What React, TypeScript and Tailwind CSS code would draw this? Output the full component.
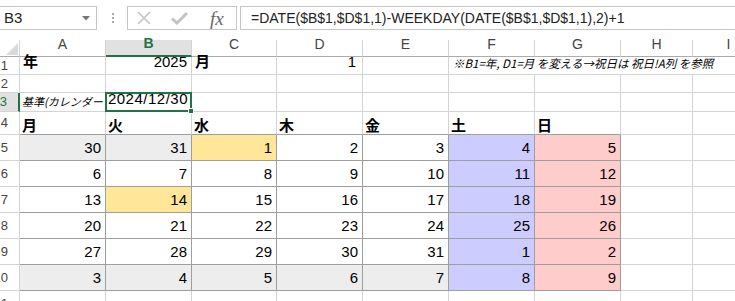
import React from 'react';

const FONT = { fontFamily: '"Liberation Sans", "Noto Sans CJK JP", sans-serif' };

const cols = ['A', 'B', 'C', 'D', 'E', 'F', 'G', 'H', 'I'];
const days = ['月', '火', '水', '木', '金', '土', '日'];

const weeks = [
  [30, 31, 1, 2, 3, 4, 5],
  [6, 7, 8, 9, 10, 11, 12],
  [13, 14, 15, 16, 17, 18, 19],
  [20, 21, 22, 23, 24, 25, 26],
  [27, 28, 29, 30, 31, 1, 2],
  [3, 4, 5, 6, 7, 8, 9],
];

// fill per week row / weekday column
const fillFor = (w: number, d: number) => {
  if (d === 5) return 'bg-[#ccccff]';
  if (d === 6) return 'bg-[#ffcccc]';
  if ((w === 0 && d === 2) || (w === 2 && d === 1)) return 'bg-[#ffe699]';
  if (w === 0 && d < 2) return 'bg-[#ededed]';
  if (w === 5) return 'bg-[#ededed]';
  return 'bg-white';
};

const RowHead: React.FC<{ n: number; selected?: boolean }> = ({ n, selected }) => (
  <div
    className={`flex items-center justify-end pr-[11px] border-b overflow-hidden text-[13px] ${
      selected
        ? 'bg-[#e1e1e1] text-[#217346] border-r-2 border-r-[#217346] border-b-[#d4d4d4]'
        : 'bg-white text-[#444] border-r border-[#d4d4d4]'
    }`}
  >
    <span className="whitespace-nowrap">{n}</span>
  </div>
);

const Empty: React.FC<{ extra?: string }> = ({ extra = '' }) => (
  <div className={`border-r border-b border-[#d4d4d4] ${extra}`} />
);

const App: React.FC = () => {
  return (
    <div className="w-[735px] h-[301px] overflow-hidden bg-white text-black" style={FONT}>
      {/* ribbon: name box + formula bar */}
      <div className="flex h-[40px] items-start pt-[6px]">
        <div className="flex items-center justify-between w-[97px] h-[24px] border border-l-0 border-[#c6c6c6] pl-[4px] pr-[6px]">
          <span className="text-[15px] text-[#222]">B3</span>
          <svg width="8" height="5" viewBox="0 0 8 5">
            <path d="M0 0 H8 L4 4.5 Z" fill="#777" />
          </svg>
        </div>
        <div className="flex flex-col gap-[2px] ml-[15px] mt-[7px]">
          <span className="w-[2px] h-[2px] bg-[#aaa]" />
          <span className="w-[2px] h-[2px] bg-[#aaa]" />
          <span className="w-[2px] h-[2px] bg-[#aaa]" />
        </div>
        <div className="flex items-center w-[110px] h-[24px] ml-[13px] border border-[#c6c6c6]">
          <svg className="ml-[8px]" width="16" height="14" viewBox="0 0 16 14">
            <path d="M2 1 L14 13 M14 1 L2 13" stroke="#c3c3c3" strokeWidth="1.6" />
          </svg>
          <svg className="ml-[19px]" width="17" height="14" viewBox="0 0 17 14">
            <path d="M1 7.5 L6 12 L16 2" stroke="#c3c3c3" strokeWidth="3" fill="none" />
          </svg>
          <span
            className="ml-[22px] text-[19px] italic text-[#666] leading-none"
            style={{ fontFamily: '"Liberation Serif", serif' }}
          >
            fx
          </span>
        </div>
        <div className="flex items-center flex-1 h-[24px] ml-[3px] border border-r-0 border-[#c6c6c6] pl-[10px]">
          <span className="text-[14px] text-[#222] whitespace-nowrap">
            =DATE($B$1,$D$1,1)-WEEKDAY(DATE($B$1,$D$1,1),2)+1
          </span>
        </div>
      </div>

      {/* sheet */}
      <div className="grid w-max grid-cols-[20px_86px_86px_85px_86px_86px_86px_86px_72px_72px] grid-rows-[17px_18px_18px_19px_23px_26px_26px_26px_26px_26px_26px_26px]">
        {/* column headers */}
        <div className="relative bg-white border-r border-b border-r-[#d4d4d4] border-b-[#ababab]">
          <svg className="absolute left-[6px] top-[3px]" width="12" height="12" viewBox="0 0 12 12">
            <path d="M12 0 V12 H0 Z" fill="#dadada" />
          </svg>
        </div>
        {cols.map((c) =>
          c === 'B' ? (
            <div
              key={c}
              className="flex items-end justify-center pb-[1px] bg-[#e1e1e1] border-r border-r-[#d4d4d4] border-b-2 border-b-[#217346] text-[14px] text-[#217346] font-bold"
            >
              {c}
            </div>
          ) : (
            <div
              key={c}
              className="flex items-end justify-center pb-[1px] bg-white border-r border-b border-r-[#d4d4d4] border-b-[#ababab] text-[14px] text-[#444]"
            >
              {c}
            </div>
          )
        )}

        {/* row 1 */}
        <RowHead n={1} />
        <div className="flex items-end pl-[3px] pb-[1px] border-r border-b border-[#d4d4d4] text-[15px] font-bold">年</div>
        <div className="flex items-end justify-end pr-[4px] pb-[1px] border-r border-b border-[#d4d4d4] text-[15px]">2025</div>
        <div className="flex items-end pl-[3px] pb-[1px] border-r border-b border-[#d4d4d4] text-[15px] font-bold">月</div>
        <div className="flex items-end justify-end pr-[6px] pb-[1px] border-r border-b border-[#d4d4d4] text-[15px]">1</div>
        <Empty />
        <div
          className="col-span-4 flex items-end pl-[4px] pb-[2px] border-b border-[#d4d4d4] text-[11.5px] italic whitespace-nowrap"
          style={{ fontFamily: '"Noto Sans CJK JP", sans-serif' }}
        >
          ※B1=年, D1=月 を変える→祝日は 祝日!A列 を参照
        </div>

        {/* row 2 */}
        <RowHead n={2} />
        {cols.map((c) => (
          <Empty key={c} />
        ))}

        {/* row 3 */}
        <RowHead n={3} selected />
        <div
          className="flex items-end pl-[2px] pb-[2px] border-r border-b border-[#d4d4d4] text-[11px] italic whitespace-nowrap overflow-hidden"
          style={{ fontFamily: '"Noto Sans CJK JP", sans-serif' }}
        >
          基準(カレンダー
        </div>
        <div className="relative flex items-end justify-end pr-[3px] pb-[1px] border-r border-b border-[#d4d4d4] text-[15px] tracking-[0.5px]">
          2024/12/30
          <div className="absolute left-[-1px] top-[-1px] right-[-1px] bottom-[-1px] border-2 border-[#217346]" />
          <div className="absolute right-[-3px] bottom-[-3px] w-[6px] h-[6px] bg-[#217346] border border-white" />
        </div>
        {cols.slice(2).map((c) => (
          <Empty key={c} />
        ))}

        {/* row 4: weekday names */}
        <RowHead n={4} />
        {days.map((d) => (
          <div
            key={d}
            className="flex items-end pl-[2px] border-r border-b border-r-[#d4d4d4] border-b-[#9e9e9e] text-[15px] font-bold leading-[18px]"
            style={{ fontFamily: '"Noto Sans CJK JP", sans-serif' }}
          >
            {d}
          </div>
        ))}
        <Empty />
        <Empty />

        {/* rows 5-10: calendar */}
        {weeks.map((week, w) => (
          <React.Fragment key={w}>
            <RowHead n={w + 5} />
            {week.map((n, d) => (
              <div
                key={d}
                className={`flex items-end justify-end pr-[4px] pb-[1px] border-r border-b border-[#9e9e9e] text-[15px] ${fillFor(w, d)}`}
              >
                {n}
              </div>
            ))}
            <Empty />
            <Empty />
          </React.Fragment>
        ))}

        {/* row 11 */}
        <RowHead n={11} />
        {cols.map((c) => (
          <Empty key={c} />
        ))}
      </div>
    </div>
  );
};

export default App;
